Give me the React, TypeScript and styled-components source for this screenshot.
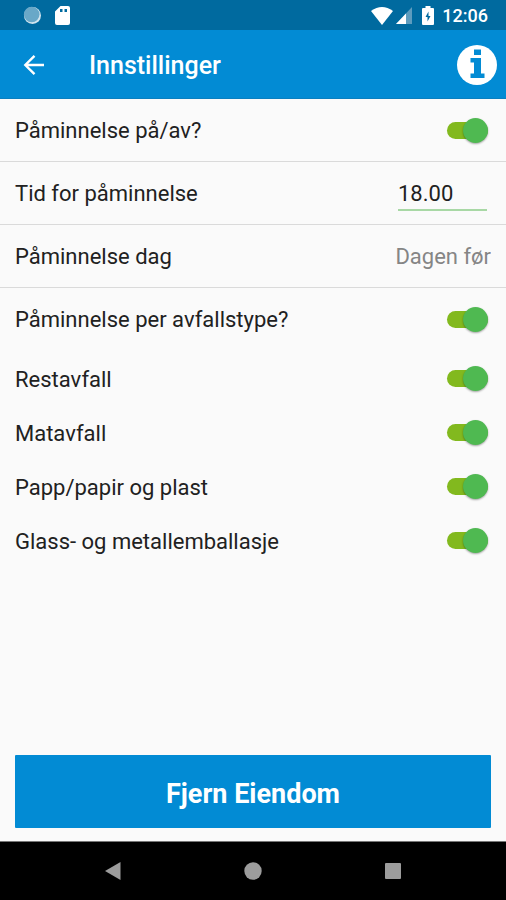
import React, { useState } from "react";
import styled, { createGlobalStyle } from "styled-components";

const GlobalStyle = createGlobalStyle`
  *, *::before, *::after { box-sizing: border-box; }
  body { margin: 0; background: #fafafa; }
  body, button, input, select { font-family: Roboto, "Liberation Sans", sans-serif; }
`;

const Screen = styled.div`
  display: flex;
  flex-direction: column;
  min-height: 100vh;
  color: #212121;
`;

const StatusBar = styled.div`
  display: flex;
  align-items: center;
  justify-content: space-between;
  height: 30px;
  padding: 1px 18px 0 23px;
  background: #006a9f;
  color: #fff;
`;

const StatusGroup = styled.div<{ $gap: number }>`
  display: flex;
  align-items: center;
  gap: ${(p) => p.$gap}px;

  svg { display: block; }
`;

const Clock = styled.time`
  font-size: 18px;
  font-weight: 500;
  line-height: 28px;
`;

const AppBar = styled.header`
  display: flex;
  align-items: center;
  height: 69px;
  padding: 1px 9px 0 12px;
  background: #028bd4;
  border-bottom: 1px solid #0a7fc0;
  color: #fff;
`;

const IconButton = styled.button`
  display: flex;
  align-items: center;
  justify-content: center;
  width: 44px;
  height: 44px;
  padding: 0;
  border: 0;
  background: transparent;
  color: inherit;
  cursor: pointer;
`;

const InfoButton = styled(IconButton)`
  width: 40px;
`;

const Title = styled.h1`
  flex: 1;
  margin: 0;
  padding: 3px 0 0 33px;
  font-size: 25px;
  font-weight: 500;
  line-height: 32px;
`;

const Settings = styled.main`
  flex: 1;
`;

const Row = styled.div<{ $divided?: boolean }>`
  display: flex;
  align-items: center;
  justify-content: space-between;
  height: 63px;
  padding: 0 15px;
  border-bottom: 1px solid ${(p) => (p.$divided ? "#dadada" : "transparent")};
`;

const TypeList = styled.div`
  padding-top: 1px;
`;

const TypeRow = styled(Row)`
  height: 54px;
`;

const Label = styled.label`
  padding-top: 2px;
  font-size: 22px;
  line-height: 30px;
`;

const Toggle = styled.input`
  appearance: none;
  display: flex;
  align-items: center;
  width: 41px;
  height: 17px;
  margin: 0 3px 0 0;
  cursor: pointer;
  background: #bdbdbd;
  border-radius: 9px;

  &::before {
    content: "";
    flex: none;
    width: 25px;
    height: 25px;
    border-radius: 50%;
    background: #f5f5f5;
    box-shadow: 0 1px 2px rgba(0, 0, 0, 0.35);
  }

  &:checked {
    justify-content: flex-end;
    background: #82b91e;
  }

  &:checked::before { background: #4fb951; }
`;

const TimeInput = styled.input`
  width: 89px;
  height: 36px;
  margin-right: 4px;
  padding: 2px 0 0;
  border: 0;
  border-bottom: 2px solid #a8d8a5;
  border-radius: 0;
  outline: 0;
  background: transparent;
  color: #212121;
  font-size: 22px;
`;

const DaySelect = styled.select`
  appearance: none;
  height: 36px;
  padding: 0;
  border: 0;
  background: transparent;
  color: #858585;
  font-size: 22px;
  text-align: right;
  text-align-last: right;
`;

const Actions = styled.div`
  padding: 0 15px 13px;
`;

const RemoveButton = styled.button`
  width: 100%;
  height: 73px;
  padding: 4px 0 0;
  border: 0;
  border-radius: 1px;
  background: #028bd4;
  color: #fff;
  font-size: 27px;
  font-weight: 700;
  cursor: pointer;
`;

const NavBar = styled.nav`
  display: flex;
  justify-content: center;
  gap: 96px;
  height: 59px;
  align-items: center;
  border-top: 1px solid #777;
  background: #000;
  color: #9c9c9c;
`;

type SwitchRowProps = { id: string; label: string; divided?: boolean; compact?: boolean };

function SwitchRow({ id, label, divided, compact }: SwitchRowProps) {
  const [on, setOn] = useState(true);
  const Container = compact ? TypeRow : Row;
  return (
    <Container $divided={divided}>
      <Label htmlFor={id}>{label}</Label>
      <Toggle id={id} type="checkbox" role="switch" checked={on} onChange={() => setOn(!on)} />
    </Container>
  );
}

const wasteTypes = [
  { id: "rest", label: "Restavfall" },
  { id: "mat", label: "Matavfall" },
  { id: "papp", label: "Papp/papir og plast" },
  { id: "glass", label: "Glass- og metallemballasje" },
];

export default function App() {
  return (
    <Screen>
      <GlobalStyle />
      <StatusBar>
        <StatusGroup $gap={13}>
          <svg width="19" height="19" viewBox="0 0 19 19" aria-hidden="true">
            <circle cx="9.5" cy="9.5" r="8.5" fill="#d3e5ef" />
            <circle cx="8.7" cy="8.5" r="7.8" fill="#69a8c8" />
          </svg>
          <svg width="15" height="19" viewBox="0 0 15 19" aria-hidden="true">
            <path fill="#fff" fillRule="evenodd" d="M5.500 0H13a2 2 0 0 1 2 2v15a2 2 0 0 1-2 2H2a2 2 0 0 1-2-2V5.500ZM5 3v3h2.500V3Zm4.500 0v3H12V3Z" />
          </svg>
        </StatusGroup>
        <StatusGroup $gap={8}>
          <StatusGroup $gap={10}>
            <StatusGroup $gap={3}>
              <svg width="22" height="18" viewBox="0 0 22 18" aria-hidden="true">
                <path fill="#fff" d="M0 4Q11-4 22 4L11 18Z" />
              </svg>
              <svg width="16" height="17" viewBox="0 0 16 17" aria-hidden="true">
                <path fill="#5d9cbe" d="M16 0v17H0Z" />
                <path fill="#fff" d="M10 6.400V17H0Z" />
              </svg>
            </StatusGroup>
            <svg width="12" height="19" viewBox="0 0 12 19" aria-hidden="true">
              <path fill="#fff" d="M3.500 0h5v2H11a1 1 0 0 1 1 1v15a1 1 0 0 1-1 1H1a1 1 0 0 1-1-1V3a1 1 0 0 1 1-1h2.500Z" />
              <path fill="#006a9f" d="M6.500 5.500 3.500 11h2v4.500L8.500 10h-2Z" />
            </svg>
          </StatusGroup>
          <Clock>12:06</Clock>
        </StatusGroup>
      </StatusBar>

      <AppBar>
        <IconButton type="button" aria-label="Tilbake">
          <svg width="22" height="22" viewBox="0 0 22 22" fill="none" stroke="currentColor" strokeWidth="2.400" aria-hidden="true">
            <path d="M21 11H3M11.500 1.800 2.300 11l9.200 9.200" />
          </svg>
        </IconButton>
        <Title>Innstillinger</Title>
        <InfoButton type="button" aria-label="Informasjon">
          <svg width="40" height="40" viewBox="0 0 40 40" aria-hidden="true">
            <circle cx="20" cy="20" r="20" fill="#fff" />
            <path fill="#028bd4" d="M17 4.500H24V10H17ZM13.500 13H24V28.500H27.500V33H13.500V28.500H17V17.500H13.500Z" />
          </svg>
        </InfoButton>
      </AppBar>

      <Settings>
        <SwitchRow id="reminder" label="Påminnelse på/av?" divided />
        <Row $divided>
          <Label htmlFor="time">Tid for påminnelse</Label>
          <TimeInput id="time" type="text" defaultValue="18.00" />
        </Row>
        <Row $divided>
          <Label htmlFor="day">Påminnelse dag</Label>
          <DaySelect id="day" defaultValue="before">
            <option value="before">Dagen før</option>
          </DaySelect>
        </Row>
        <SwitchRow id="per-type" label="Påminnelse per avfallstype?" />
        <TypeList>
          {wasteTypes.map((t) => (
            <SwitchRow key={t.id} id={t.id} label={t.label} compact />
          ))}
        </TypeList>
      </Settings>

      <Actions>
        <RemoveButton type="button">Fjern Eiendom</RemoveButton>
      </Actions>

      <NavBar aria-label="System">
        <IconButton type="button" aria-label="Tilbake">
          <svg width="16" height="18" viewBox="0 0 16 18" aria-hidden="true">
            <path fill="currentColor" d="M15.500 0v18L0 9Z" />
          </svg>
        </IconButton>
        <IconButton type="button" aria-label="Hjem">
          <svg width="18" height="18" viewBox="0 0 18 18" aria-hidden="true">
            <circle cx="9" cy="9" r="8.700" fill="currentColor" />
          </svg>
        </IconButton>
        <IconButton type="button" aria-label="Oversikt">
          <svg width="16" height="16" viewBox="0 0 16 16" aria-hidden="true">
            <rect width="16" height="16" rx="1" fill="currentColor" />
          </svg>
        </IconButton>
      </NavBar>
    </Screen>
  );
}
